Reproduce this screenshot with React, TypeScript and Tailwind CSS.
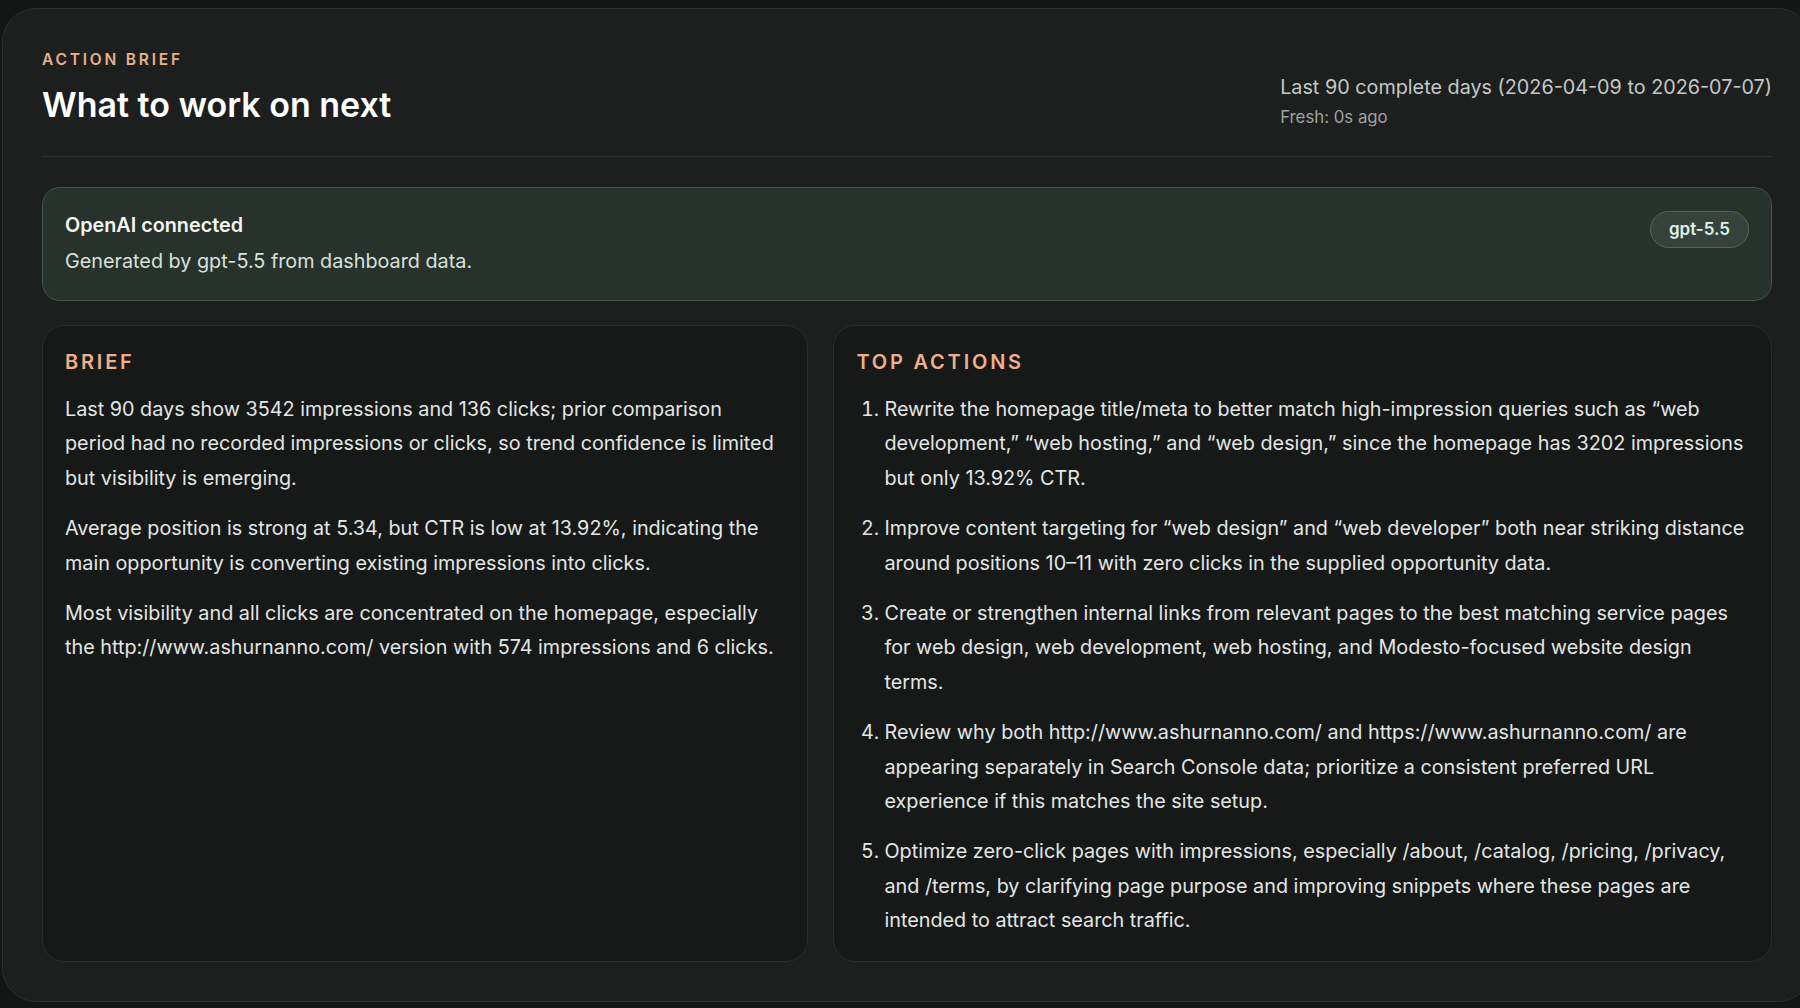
const briefParagraphs = [
  "Last 90 days show 3542 impressions and 136 clicks; prior comparison period had no recorded impressions or clicks, so trend confidence is limited but visibility is emerging.",
  "Average position is strong at 5.34, but CTR is low at 13.92%, indicating the main opportunity is converting existing impressions into clicks.",
  "Most visibility and all clicks are concentrated on the homepage, especially the http://www.ashurnanno.com/ version with 574 impressions and 6 clicks.",
];

const topActions = [
  "Rewrite the homepage title/meta to better match high-impression queries such as \u201cweb development,\u201d \u201cweb hosting,\u201d and \u201cweb design,\u201d since the homepage has 3202 impressions but only 13.92% CTR.",
  "Improve content targeting for \u201cweb design\u201d and \u201cweb developer\u201d both near striking distance around positions 10\u201311 with zero clicks in the supplied opportunity data.",
  "Create or strengthen internal links from relevant pages to the best matching service pages for web design, web development, web hosting, and Modesto-focused website design terms.",
  "Review why both http://www.ashurnanno.com/ and https://www.ashurnanno.com/ are appearing separately in Search Console data; prioritize a consistent preferred URL experience if this matches the site setup.",
  "Optimize zero-click pages with impressions, especially /about, /catalog, /pricing, /privacy, and /terms, by clarifying page purpose and improving snippets where these pages are intended to attract search traffic.",
];

export default function App() {
  return (
    <div className="min-h-screen overflow-hidden bg-[#131615] pt-[8px] pl-[2px] pb-[6px] font-['Inter',sans-serif]">
      <div className="mr-[-12px] rounded-[34px] border border-[#2b2f2d] bg-[#1c1f1e] p-[39px]">
        <div className="flex items-end justify-between border-b border-[#2e3230] pb-[30px]">
          <div className="pt-[1px]">
            <p className="text-[15.5px] font-semibold uppercase leading-[21px] tracking-[0.18em] text-[#e9b08c]">
              Action Brief
            </p>
            <h1 className="mt-[14px] text-[34px] font-semibold leading-[42px] text-white">
              What to work on next
            </h1>
          </div>
          <div className="-mb-[2px]">
            <p className="text-[19.8px] leading-[28px] text-[#c4c8c6]">
              Last 90 complete days (2026-04-09 to 2026-07-07)
            </p>
            <p className="mt-[5px] text-[16.8px] leading-[22px] text-[#9fa5a2]">Fresh: 0s ago</p>
          </div>
        </div>

        <div className="mt-[30px] flex items-start justify-between rounded-[18px] border border-[#43574b] bg-[#27322d] pl-[22px] pr-[22px] pt-[23px] pb-[25px]">
          <div>
            <p className="text-[19.8px] font-semibold leading-[28px] text-[#f2f5f3]">OpenAI connected</p>
            <p className="mt-[8px] text-[19.8px] leading-[28px] text-[#d8e1dc]">
              Generated by gpt-5.5 from dashboard data.
            </p>
          </div>
          <span className="rounded-full border border-[#55645a] bg-[#37423c] px-[18px] py-[6px] text-[17px] font-semibold leading-[23px] text-[#dcf4e7]">
            gpt-5.5
          </span>
        </div>

        <div className="mt-[24px] grid grid-cols-[766fr_938fr] gap-[25px]">
          <section className="rounded-[22px] border border-[#2a2e2c] bg-[#161918] px-[22px] pt-[22px] pb-[23px]">
            <h2 className="text-[20px] font-semibold uppercase leading-[28px] tracking-[0.14em] text-[#eeb08c]">Brief</h2>
            <div className="mt-[16px] flex flex-col gap-[16px]">
              {briefParagraphs.map((p) => (
                <p key={p.slice(0, 20)} className="text-[19.8px] leading-[34.4px] text-[#e3e6e4]">
                  {p}
                </p>
              ))}
            </div>
          </section>

          <section className="rounded-[22px] border border-[#2a2e2c] bg-[#161918] pl-[22px] pr-[20px] pt-[22px] pb-[23px]">
            <h2 className="text-[20px] font-semibold uppercase leading-[28px] tracking-[0.14em] text-[#eeb08c]">Top Actions</h2>
            <ol className="mt-[16px] flex list-decimal flex-col gap-[16px] pl-[28px]">
              {topActions.map((a) => (
                <li key={a.slice(0, 20)} className="text-[19.8px] leading-[34.4px] text-[#e3e6e4]">
                  {a}
                </li>
              ))}
            </ol>
          </section>
        </div>
      </div>
    </div>
  );
}
